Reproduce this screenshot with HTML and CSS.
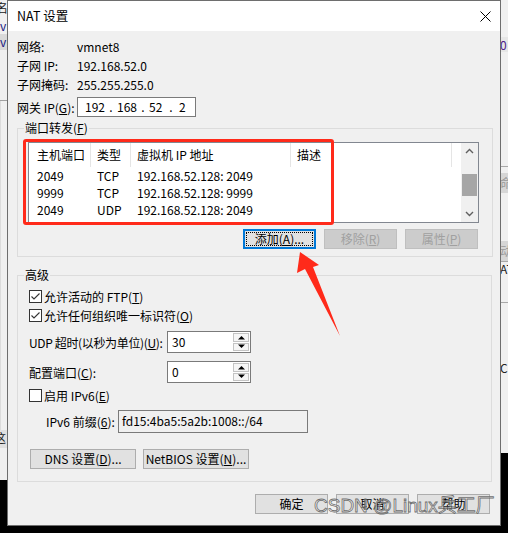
FILE: index.html
```html
<!DOCTYPE html>
<html lang="zh-CN">
<head>
<meta charset="utf-8">
<title>NAT 设置</title>
<link rel="stylesheet" href="styles.css">
</head>
<body>
<div class="desktop">
  <div class="bgwin">
    <div class="strip left-strip">
      <div class="frag f-top">名</div>
      <div class="frag f-v">v</div>
      <div class="frag f-band">v</div>
      <div class="frag f-fill1"></div>
      <div class="frag f-line"></div>
      <div class="frag f-fill2"></div>
      <div class="frag f-band2">这</div>
      <div class="frag f-fill3"></div>
    </div>
    <div class="spacer"></div>
    <div class="strip right-strip">
      <div class="frag r-top"></div>
      <div class="frag r-band">0</div>
      <div class="frag r-fill1"></div>
      <div class="frag r-line"></div>
      <div class="frag r-fill2"></div>
      <div class="frag r-band2">命</div>
      <div class="frag r-fill3"></div>
      <div class="frag r-band2">动</div>
      <div class="frag r-line"></div>
      <div class="frag r-txt">AT</div>
      <div class="frag r-fill4"></div>
      <div class="frag r-line"></div>
      <div class="frag r-fill5"></div>
      <div class="frag r-txt">CR</div>
      <div class="frag r-fill6"></div>
    </div>
  </div>

  <div class="dialog">
    <div class="titlebar">
      <span class="title">NAT 设置</span>
      <svg class="close" width="11" height="11" viewBox="0 0 11 11"><path d="M0.5 0.5 L10.5 10.5 M10.5 0.5 L0.5 10.5" stroke="#000" stroke-width="1" fill="none"/></svg>
    </div>
    <div class="body">
      <div class="info">
        <span class="lbl">网络:</span><span class="val">vmnet8</span>
        <span class="lbl">子网 IP:</span><span class="val">192.168.52.0</span>
        <span class="lbl">子网掩码:</span><span class="val">255.255.255.0</span>
      </div>
      <div class="gw-row">
        <span class="lbl">网关 IP(<u>G</u>):</span>
        <div class="ipbox"><span class="oct">192</span><span class="dot">.</span><span class="oct">168</span><span class="dot">.</span><span class="oct">52</span><span class="dot">.</span><span class="oct">2</span></div>
      </div>

      <div class="group g1">
        <span class="glabel">端口转发(<u>F</u>)</span>
        <div class="list">
          <div class="list-main">
            <div class="lrow head">
              <div class="c c1">主机端口</div>
              <div class="c c2">类型</div>
              <div class="c c3">虚拟机 IP 地址</div>
              <div class="c c4">描述</div>
            </div>
            <div class="lrow">
              <div class="c c1">2049</div><div class="c c2">TCP</div><div class="c c3">192.168.52.128: 2049</div><div class="c c4"></div>
            </div>
            <div class="lrow">
              <div class="c c1">9999</div><div class="c c2">TCP</div><div class="c c3">192.168.52.128: 9999</div><div class="c c4"></div>
            </div>
            <div class="lrow">
              <div class="c c1">2049</div><div class="c c2">UDP</div><div class="c c3">192.168.52.128: 2049</div><div class="c c4"></div>
            </div>
          </div>
          <div class="vscroll">
            <div class="sbtn"><svg width="17" height="17" viewBox="0 0 17 17"><path d="M5 10 L8.5 6.5 L12 10" stroke="#606060" stroke-width="1.4" fill="none"/></svg></div>
            <div class="track"><div class="thumb"></div></div>
            <div class="sbtn"><svg width="17" height="17" viewBox="0 0 17 17"><path d="M5 7 L8.5 10.5 L12 7" stroke="#606060" stroke-width="1.4" fill="none"/></svg></div>
          </div>
        </div>
        <div class="btnrow">
          <button class="btn default">添加(<u>A</u>)...</button>
          <button class="btn disabled">移除(<u>R</u>)</button>
          <button class="btn disabled">属性(<u>P</u>)</button>
        </div>
      </div>

      <div class="group g2">
        <span class="glabel">高级</span>
        <div class="cb-row">
          <span class="cbox"><svg width="13" height="13" viewBox="0 0 13 13"><path d="M2.5 6.5 L5 9 L10.5 3.5" stroke="#333" stroke-width="1.1" fill="none"/></svg></span>
          <span>允许活动的 FTP(<u>T</u>)</span>
        </div>
        <div class="cb-row">
          <span class="cbox"><svg width="13" height="13" viewBox="0 0 13 13"><path d="M2.5 6.5 L5 9 L10.5 3.5" stroke="#333" stroke-width="1.1" fill="none"/></svg></span>
          <span>允许任何组织唯一标识符(<u>O</u>)</span>
        </div>
        <div class="spin-row r-udp">
          <span class="slabel tight">UDP 超时(以秒为单位)(<u>U</u>):</span>
          <div class="spin">
            <span class="spin-val">30</span>
            <div class="spin-btns">
              <div class="sp up"><svg width="9" height="5" viewBox="0 0 9 5"><path d="M1 4.5 L4.5 1 L8 4.5 Z" fill="#000"/></svg></div>
              <div class="sp down"><svg width="9" height="5" viewBox="0 0 9 5"><path d="M1 0.5 L4.5 4 L8 0.5 Z" fill="#000"/></svg></div>
            </div>
          </div>
        </div>
        <div class="spin-row r-port">
          <span class="slabel">配置端口(<u>C</u>):</span>
          <div class="spin">
            <span class="spin-val">0</span>
            <div class="spin-btns">
              <div class="sp up"><svg width="9" height="5" viewBox="0 0 9 5"><path d="M1 4.5 L4.5 1 L8 4.5 Z" fill="#000"/></svg></div>
              <div class="sp down"><svg width="9" height="5" viewBox="0 0 9 5"><path d="M1 0.5 L4.5 4 L8 0.5 Z" fill="#000"/></svg></div>
            </div>
          </div>
        </div>
        <div class="cb-row r-ipv6">
          <span class="cbox"></span>
          <span>启用 IPv6(<u>E</u>)</span>
        </div>
        <div class="prefix-row">
          <span class="plabel">IPv6 前缀(<u>6</u>):</span>
          <div class="prefix">fd15:4ba5:5a2b:1008::/64</div>
        </div>
        <div class="dns-row">
          <button class="btn wide">DNS 设置(<u>D</u>)...</button>
          <button class="btn wide">NetBIOS 设置(<u>N</u>)...</button>
        </div>
      </div>

      <div class="footer">
        <button class="btn">确定</button>
        <button class="btn">取消</button>
        <button class="btn">帮助</button>
      </div>
    </div>
  </div>

  <div class="redbox"></div>
  <svg class="arrow" width="60" height="90" viewBox="0 0 60 90">
    <polygon points="10,0 29,13 23,15 50,84 15,17 7,21" fill="#ff2a1a"/>
  </svg>
  <div class="watermark">CSDN @Linux兵工厂</div>
</div>
</body>
</html>
```

FILE: styles.css
```css
* { box-sizing: border-box; }

html, body {
  margin: 0;
  padding: 0;
  background: #000;
}

body {
  font-family: "Noto Sans CJK SC", "Noto Sans", "Liberation Sans", sans-serif;
  font-size: 12px;
  color: #000;
}

u { text-decoration: underline; text-underline-offset: 1px; }

.desktop {
  position: relative;
  width: 508px;
  height: 533px;
  overflow: hidden;
  background: #000;
}

/* background window fragments */
.bgwin {
  display: flex;
  width: 508px;
  height: 533px;
}
.spacer { flex: 1; }
.strip {
  display: flex;
  flex-direction: column;
  width: 8px;
  overflow: hidden;
  font-size: 12px;
  line-height: 16px;
  color: #1a1a80;
}
.left-strip { width: 7px; }
.frag { background: #f0f0f0; white-space: nowrap; overflow: hidden; }
.f-top { height: 18px; color: #222; text-indent: -4px; }
.f-v { height: 16px; }
.f-band { height: 16px; background: #d9d9d9; }
.f-fill1 { height: 50px; }
.f-line { height: 1px; background: #a0a0a0; }
.f-fill2 { height: 329px; border-left: 1px solid #dcdcdc; }
.f-band2 { height: 18px; background: #e0e0e0; color: #222; text-indent: -6px; }
.f-fill3 { height: 32px; }

.r-top { height: 37px; }
.r-band { height: 15px; background: #e6e6e6; color: #4b1a8a; line-height: 15px; }
.r-fill1 { height: 114px; }
.r-line { height: 1px; background: #a8a8a8; }
.r-fill2 { height: 6px; }
.r-band2 { height: 20px; background: #d6d6d6; color: #999; line-height: 20px; }
.r-fill3 { height: 48px; }
.r-txt { height: 14px; line-height: 14px; color: #222; }
.r-fill4 { height: 26px; }
.r-fill5 { height: 58px; }
.r-fill6 { height: 78px; }

/* dialog */
.dialog {
  position: absolute;
  left: 7px;
  top: 0;
  width: 494px;
  height: 526px;
  border: 1px solid #6e6e6e;
  background: #f0f0f0;
  display: flex;
  flex-direction: column;
}

.titlebar {
  height: 30px;
  flex: none;
  background: #fff;
  display: flex;
  align-items: center;
  justify-content: space-between;
  padding: 0 9px 0 9px;
}
.title { font-size: 12.5px; line-height: 16px; }
.close { display: block; margin-right: 0; }

.body {
  padding: 6px 7px 0 9px;
  display: flex;
  flex-direction: column;
}

.info {
  display: grid;
  grid-template-columns: 60px auto;
  grid-auto-rows: 19px;
  line-height: 19px;
}
.gw-row {
  display: flex;
  align-items: center;
  height: 20px;
  margin-top: 3px;
}
.gw-row .lbl { width: 60px; }
.ipbox {
  width: 119px;
  height: 20px;
  border: 1px solid #7a7a7a;
  background: #fff;
  display: flex;
  align-items: center;
  padding-left: 7px;
  line-height: 18px;
}
.oct { display: inline-block; }
.dot { display: inline-block; width: 12px; text-align: center; }
.ipbox .oct:nth-child(1) { width: 20px; }
.ipbox .oct:nth-child(3) { width: 20px; }
.ipbox .oct:nth-child(5) { width: 14px; }
.ipbox .dot:nth-child(6) { width: 16px; }

/* group boxes */
.group {
  position: relative;
  border: 1px solid #dcdcdc;
}
.glabel {
  position: absolute;
  top: -9px;
  left: 6px;
  padding: 0 1px;
  line-height: 16px;
  background: #f0f0f0;
}
.g1 {
  margin-top: 11px;
  padding: 13px 13px 7px 10px;
}
.g2 {
  margin-top: 18px;
  margin-right: 1px;
  padding: 11px 10px 12px 11px;
}

/* list view */
.list {
  height: 81px;
  border: 1px solid #828790;
  background: #fff;
  display: flex;
}
.list-main { flex: 1; }
.lrow {
  display: flex;
  height: 17px;
  line-height: 17px;
  white-space: nowrap;
}
.lrow.head { height: 24px; line-height: 23px; }
.c { padding-left: 6px; overflow: hidden; }
.c1 { width: 62px; padding-left: 8px; }
.c2 { width: 40px; }
.c3 { width: 160px; }
.c4 { width: 161px; }
.head .c { border-right: 1px solid #e5e5e5; }

.vscroll {
  width: 17px;
  margin-left: auto;
  background: #f0f0f0;
  display: flex;
  flex-direction: column;
}
.sbtn { height: 17px; }
.sbtn svg { display: block; }
.track { flex: 1; }
.thumb {
  margin: 14px 1px 0 1px;
  height: 22px;
  background: #a6a6a6;
}

/* buttons */
.btn {
  font: inherit;
  width: 73px;
  height: 20px;
  padding: 0;
  margin: 0;
  line-height: 18px;
  background: #e1e1e1;
  border: 1px solid #adadad;
  color: #000;
  position: relative;
  white-space: nowrap;
}
.btn.default {
  border: 1px solid #0078d7;
  box-shadow: inset 0 0 0 1px #0078d7;
}
.btn.default::after {
  content: "";
  position: absolute;
  inset: 2px;
  border: 1px dotted #000;
}
.btn.disabled {
  background: #cccccc;
  border-color: #bfbfbf;
  color: #a0a0a0;
}
.btnrow {
  margin-top: 6px;
  display: flex;
  justify-content: flex-end;
  gap: 8px;
  padding-right: 1px;
}

/* advanced */
.cb-row {
  display: flex;
  align-items: center;
  height: 19px;
  gap: 2px;
}
.cbox {
  width: 13px;
  height: 13px;
  border: 1px solid #333;
  background: #fff;
  display: flex;
  align-items: center;
  justify-content: center;
  position: relative;
}
.cbox svg { position: absolute; left: -1px; top: -1px; }

.spin-row {
  display: flex;
  align-items: center;
  height: 22px;
}
.r-udp { margin-top: 6px; }
.r-port { margin-top: 8px; }
.slabel {
  width: 138px;
  flex: none;
  white-space: nowrap;
}
.slabel.tight { letter-spacing: -0.35px; }
.spin {
  width: 84px;
  height: 22px;
  border: 1px solid #7a7a7a;
  background: #fff;
  display: flex;
}
.spin-val { flex: 1; padding-left: 4px; line-height: 19px; }
.spin-btns {
  width: 17px;
  display: flex;
  flex-direction: column;
  padding: 1px 1px 1px 0;
  gap: 1px;
}
.sp {
  flex: 1;
  background: #f6f6f6;
  border: 1px solid #c4c4c4;
  display: flex;
  align-items: center;
  justify-content: center;
}
.sp svg { display: block; }

.r-ipv6 { margin-top: 3px; }

.prefix-row {
  display: flex;
  align-items: center;
  height: 23px;
  margin-top: 5px;
}
.plabel { width: 89px; padding-left: 17px; white-space: nowrap; }
.prefix {
  width: 190px;
  height: 23px;
  border: 1px solid #7a7a7a;
  background: #f0f0f0;
  padding-left: 3px;
  line-height: 20px;
}

.dns-row {
  margin-top: 16px;
  margin-left: 1px;
  display: flex;
  gap: 7px;
}
.btn.wide { width: 106px; }

.footer {
  margin-top: 12px;
  display: flex;
  justify-content: flex-end;
  gap: 8px;
  padding-right: 3px;
}

/* annotations */
.redbox {
  position: absolute;
  left: 23px;
  top: 139px;
  width: 311px;
  height: 86px;
  border: 3px solid #ff2a1a;
  border-radius: 3px;
}
.arrow {
  position: absolute;
  left: 290px;
  top: 252px;
}
.watermark {
  position: absolute;
  left: 314px;
  top: 494px;
  font-family: "Liberation Sans", "Noto Sans CJK SC", sans-serif;
  font-size: 19px;
  line-height: 24px;
  color: rgba(255, 255, 255, 0.45);
  -webkit-text-stroke: 0.8px rgba(95, 95, 95, 0.9);
  white-space: nowrap;
}
```
